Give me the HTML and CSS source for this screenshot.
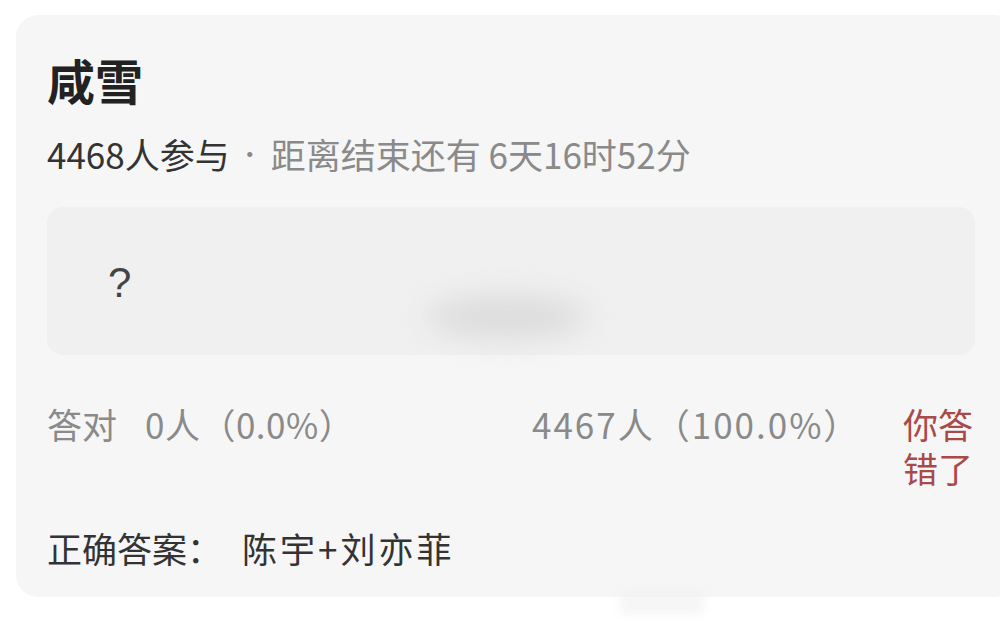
FILE: index.html
```html
<!DOCTYPE html>
<html lang="zh">
<head>
    <meta charset="UTF-8">
    <meta name="viewport" content="width=device-width, initial-scale=1.0">
    <title>咸雪</title>
    <link rel="stylesheet" href="styles.css">
</head>
<body>
    <div class="page">
        <div class="card">
            <h1 class="title">咸雪</h1>
            <p class="meta"><span class="count">4468人参与</span><span class="dot">·</span>距离结束还有 6天16时52分</p>

            <div class="question">
                <span class="mark">?</span>
                <div class="smudge"></div>
            </div>

            <div class="stats">
                <span class="right-count">答对<span class="num">0人（0.0%）</span></span>
                <span class="wrong-count">4467人（100.0%）</span>
                <span class="result">你答错了</span>
            </div>

            <p class="answer">正确答案：<span class="names">陈宇+刘亦菲</span></p>
        </div>
        <div class="watermark"></div>
    </div>
</body>
</html>
```

FILE: styles.css
```css
body {
    margin: 0;
    background: #fff;
    font-family: "Noto Sans CJK SC", "Noto Sans", sans-serif;
    color: #333;
    overflow: hidden;
}
.page {
    position: relative;
    height: 628px;
    padding-top: 15px;
    box-sizing: border-box;
}
.card {
    margin-left: 16px;
    width: 1000px;
    box-sizing: border-box;
    padding: 36px 41px 27px 31px;
    background: #f6f6f6;
    border-radius: 22px;
}
.title {
    margin: 0;
    font-size: 48px;
    line-height: 56px;
    font-weight: 700;
    color: #222;
}
.meta {
    margin: 25px 0 0;
    font-size: 35px;
    line-height: 44px;
    height: 44px;
    color: #8a8a8a;
}
.meta .count {
    color: #333;
}
.meta .dot {
    display: inline-block;
    margin: 0 9px 0 8px;
    line-height: 1;
    font-size: 24px;
    vertical-align: 6px;
}
.question {
    position: relative;
    margin-top: 31px;
    height: 148px;
    background: #f0f0f0;
    border-radius: 16px;
    padding-left: 61px;
    display: flex;
    align-items: center;
}
.mark {
    font-size: 42px;
    color: #444;
    font-family: "Liberation Sans", sans-serif;
    margin-top: 4px;
}
.smudge {
    position: absolute;
    left: 380px;
    top: 88px;
    width: 160px;
    height: 44px;
    border-radius: 50%;
    background: #dcdcdc;
    filter: blur(14px);
}
.stats {
    margin-top: 47px;
    display: flex;
    align-items: flex-start;
    font-size: 35px;
    line-height: 44px;
    color: #8a8a8a;
}
.right-count {
    width: 485px;
}
.right-count .num {
    margin-left: 28px;
    letter-spacing: 0.5px;
}
.wrong-count {
    flex: 1;
    letter-spacing: 2px;
}
.result {
    width: 72px;
    color: #a84a4a;
}
.answer {
    margin: 36px 0 0;
    font-size: 35px;
    line-height: 44px;
    color: #333;
}
.answer .names {
    margin-left: 20px;
    letter-spacing: 3px;
}
.watermark {
    position: absolute;
    left: 620px;
    top: 592px;
    width: 84px;
    height: 22px;
    background: #ececec;
    filter: blur(5px);
    opacity: 0.5;
}
```
